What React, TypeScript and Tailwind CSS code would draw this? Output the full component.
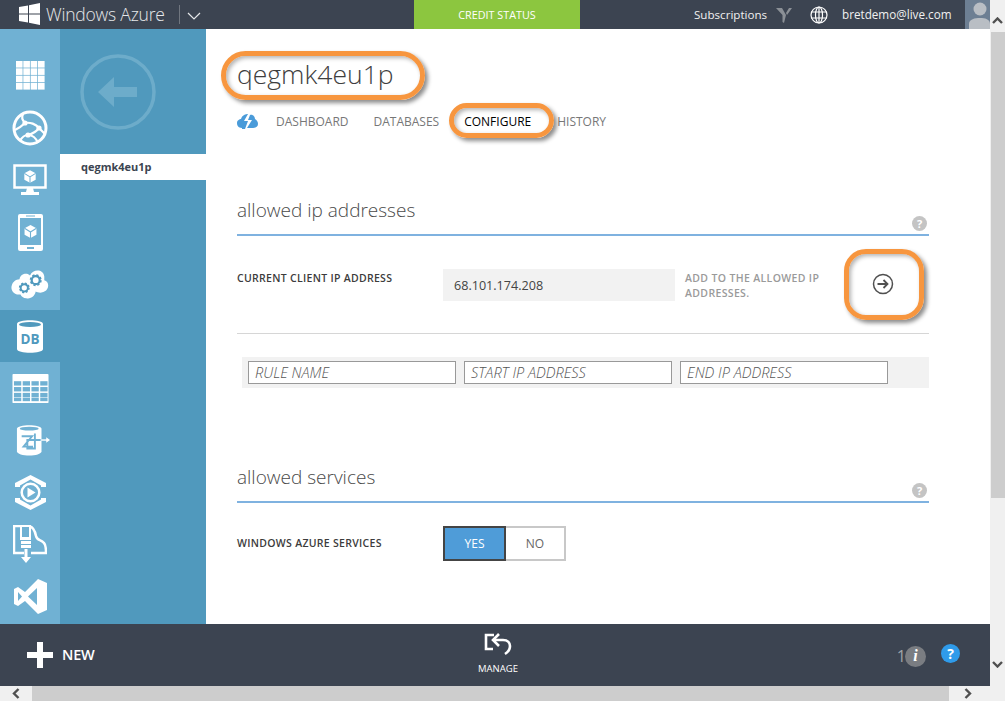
import React from 'react';

const FONT = { fontFamily: '"Open Sans", sans-serif' };

// Rail icons, drawn to fit a 48x48 box
const RAIL = '#70b1d3';
const TILE = '#5099bd';

function Cube({ x, y, s, fill }: { x: number; y: number; s: number; fill: string }) {
  return (
    <g transform={`translate(${x} ${y}) scale(${s})`}>
      <path d="M0 -6 L5.4 -3 L5.4 3 L0 6 L-5.4 3 L-5.4 -3 Z" fill="#fff" />
      <path d="M0 0.4 L0 6 M0 0.4 L-5.4 -3 M0 0.4 L5.4 -3" stroke={fill} strokeWidth="1" fill="none" />
    </g>
  );
}

function Gear({ x, y, r }: { x: number; y: number; r: number }) {
  return (
    <g>
      <circle cx={x} cy={y} r={r} fill="none" stroke={TILE} strokeWidth={r * 0.55} />
      <circle cx={x} cy={y} r={r * 1.3} fill="none" stroke={TILE} strokeWidth={r * 0.4} strokeDasharray={`${r * 0.55} ${r * 0.47}`} />
    </g>
  );
}

const icons: React.ReactNode[] = [
  <svg key="grid" width="29" height="29" viewBox="0 0 29 29" className="-mt-[1px]">
    {[0, 7.33, 14.66, 22].flatMap((y) =>
      [0, 7.33, 14.66, 22].map((x) => <rect key={`${x}-${y}`} x={x} y={y} width="6.6" height="6.6" fill="#fff" />),
    )}
  </svg>,
  <svg key="globe" width="36" height="36" viewBox="0 0 36 36" className="-mt-[1px]">
    <circle cx="18" cy="18" r="16" fill="none" stroke="#fff" strokeWidth="3" />
    <path d="M11 4 C9 8 11 11 13 13 C18 12 24 14 27 18 L33 24 M3 20 C7 18 10 16 13 13 M8 31 C10 27 13 25 16 25 C20 25 24 28 26 33 M27 18 C24 22 20 24 16 25" fill="none" stroke="#fff" strokeWidth="2.2" />
    <circle cx="13" cy="13" r="2.6" fill="#fff" />
    <circle cx="27" cy="18" r="2.6" fill="#fff" />
    <circle cx="16" cy="25" r="2.6" fill="#fff" />
  </svg>,
  <svg key="vm" width="34" height="32" viewBox="0 0 34 32">
    <rect x="1.5" y="1.5" width="31" height="22" fill="none" stroke="#fff" strokeWidth="2.5" />
    <Cube x={17} y={12.5} s={1.05} fill={RAIL} />
    <path d="M14 24 H20 L21 28 H26 V31 H8 V28 H13 Z" fill="#fff" />
  </svg>,
  <svg key="mobile" width="27" height="39" viewBox="0 0 27 39">
    <rect x="1" y="1" width="25" height="37" rx="2" fill="#fff" />
    <rect x="3" y="5" width="21" height="27" fill={RAIL} />
    <rect x="9" y="2.5" width="9" height="1" fill={RAIL} />
    <rect x="10" y="34" width="7" height="2" fill={RAIL} />
    <Cube x={13.5} y={18.5} s={1.1} fill={RAIL} />
  </svg>,
  <svg key="cloud" width="40" height="34" viewBox="0 0 42 34">
    <path
      d="M10 12 C11 6 18 5 21 8 C24 1 35 1 36 9 C36 11 36 12 36 13 C41 14 42 22 36 25 C33 27 29 26 27 25 C26 30 22 33 17 32 C14 32 12 30 11 28 C4 29 0 23 2 18 C3 15 6 12 10 12 Z"
      fill="#fff"
    />
    <Gear x={15} y={21} r={3.8} />
    <Gear x={27} y={13} r={4.2} />
  </svg>,
  <svg key="db" width="28" height="35" viewBox="0 0 28 35">
    <path d="M1 5 C1 0 27 0 27 5 V30 C27 35 1 35 1 30 Z" fill="#fff" />
    <ellipse cx="14" cy="5.5" rx="11" ry="2.5" fill={TILE} />
    <text x="14" y="25" textAnchor="middle" fontSize="13.5" fontWeight="700" fill={TILE} fontFamily="Open Sans, sans-serif">
      DB
    </text>
  </svg>,
  <svg key="table" width="37" height="31" viewBox="0 0 38 31">
    <rect x="0.5" y="0.5" width="37" height="30" rx="1" fill="#fff" />
    {[8, 14, 20, 25].flatMap((y) =>
      [2, 11, 20, 29].map((x) => <rect key={`${x}-${y}`} x={x} y={y} width="7.5" height={y === 25 ? 3.5 : 4.5} fill={RAIL} />),
    )}
  </svg>,
  <svg key="sync" width="34" height="35" viewBox="0 0 36 35" className="ml-[6px]">
    <path d="M1 5 C1 0 27 0 27 5 V29 C27 35 1 35 1 29 Z" fill="#fff" />
    <ellipse cx="14" cy="5" rx="10" ry="2" fill={RAIL} />
    <path d="M6 13 H17 L8 24 H18 M20 10 V26 H12 V17 H30" fill="none" stroke={RAIL} strokeWidth="2" />
    <path d="M26 17 H33" stroke="#fff" strokeWidth="1.5" />
    <path d="M32 14 L36 17 L32 20 Z" fill="#fff" />
  </svg>,
  <svg key="media" width="33" height="37" viewBox="0 0 33 37">
    <path d="M1 12 V9 L16.5 1 L32 9 V13 L27 13 V11.5 L16.5 5.5 L6 11.5 V13 L1 13 Z" fill="#fff" />
    <path d="M1 24 V28 L16.5 36 L32 28 V24 L27 24 V25.5 L16.5 31.5 L6 25.5 V24 Z" fill="#fff" />
    <circle cx="16.5" cy="18.5" r="8.8" fill="none" stroke="#fff" strokeWidth="2.5" />
    <path d="M13.5 13.5 L21.5 18.5 L13.5 23.5 Z" fill="#fff" />
  </svg>,
  <svg key="import" width="34" height="38" viewBox="0 0 34 38">
    <path d="M11 28 H1 V1 H15 C20 1 22 6 23 11 C24 16 28 14 31 18 C33 20 33 24 33 28 H18" fill="none" stroke="#fff" strokeWidth="2.5" />
    <rect x="8" y="1" width="9" height="13" fill={RAIL} stroke="#fff" strokeWidth="2" />
    <rect x="8" y="12" width="10" height="3" fill="#fff" />
    <rect x="8" y="16" width="10" height="3" fill="#fff" />
    <rect x="8" y="20" width="10" height="3" fill="#fff" />
    <path d="M11.5 24 H14.5 V32 H18 L13 38 L8 32 H11.5 Z" fill="#fff" />
  </svg>,
  <svg key="vs" width="33" height="35" viewBox="0 0 33 35">
    <path d="M24 0 L33 4 V31 L24 35 L11 22 L4 27 L0 25 V10 L4 8 L11 13 Z M23 9 L14 17.5 L23 26 Z M4 13 V22 L8 17.5 Z" fill="#fff" fillRule="evenodd" />
  </svg>,
];

function HelpDot({ className }: { className?: string }) {
  return (
    <div className={`flex h-[15px] w-[15px] items-center justify-center rounded-full bg-[#c4c4c4] text-[11px] leading-none font-bold text-white ${className ?? ''}`}>
      ?
    </div>
  );
}

function SectionHeading({ title }: { title: string }) {
  return (
    <div className="relative h-[43px] border-b-2 border-[#7fb2e0] pt-[3px] text-[19px] leading-[28px] font-light text-[#4a4a4a]">
      {title}
      <HelpDot className="absolute right-[2px] bottom-[3px]" />
    </div>
  );
}

function TextField({ placeholder }: { placeholder: string }) {
  return (
    <div className="flex h-[23px] w-[208px] items-center border border-[#999] bg-white px-[6px] pt-[1px] text-[14.5px] font-light text-[#555] italic">
      {placeholder}
    </div>
  );
}

function Callout({ className }: { className: string }) {
  return <div className={`pointer-events-none absolute border-[5px] border-[#f7963f] shadow-[3px_3px_4px_rgba(0,0,0,0.45),inset_2px_2px_4px_rgba(0,0,0,0.3)] ${className}`} />;
}

export default function App() {
  return (
    <div className="relative flex h-[701px] w-[1005px] flex-col overflow-hidden bg-white" style={FONT}>
      <div className="flex min-h-0 flex-1">
        <div className="flex min-w-0 flex-1 flex-col">
          {/* top bar */}
          <header className="flex h-[29px] shrink-0 items-center whitespace-nowrap bg-[#3c4451] text-white">
            <svg width="22" height="22" viewBox="0 0 22 22" className="mt-[-2px] ml-[19px] shrink-0">
              <path d="M0 4 L9 2.5 V10.5 H0 Z M10 2.3 L21 0 V10.5 H10 Z M0 11.5 H9 V19.5 L0 18 Z M10 11.5 H21 V22 L10 19.7 Z" fill="#fff" />
            </svg>
            <span className="ml-[5px] w-[133px] text-[17.5px] font-light tracking-[-0.2px] text-[#e6e8ea]">Windows Azure</span>
            <div className="h-[19px] w-px bg-[#70767f]" />
            <svg width="14" height="8" viewBox="0 0 14 8" className="mt-[3px] ml-[7px]">
              <path d="M1 1 L7 7 L13 1" fill="none" stroke="#e6e8ea" strokeWidth="1.2" />
            </svg>
            <div className="ml-[213px] flex h-full w-[166px] items-center justify-center bg-[#8cc63f] pt-[1px] text-[10.8px]">CREDIT STATUS</div>
            <span className="ml-[114px] w-[73px] text-[11.6px] text-[#f0f0f0]">Subscriptions</span>
            <svg width="16" height="16" viewBox="0 0 16 16" className="ml-[9px]">
              <path d="M0 1 L6 1 L10 8 L8 16 L6.5 15 V8 Z M10 6 L13 1 H16 L11 8 Z" fill="#8b9096" />
            </svg>
            <svg width="18" height="18" viewBox="0 0 18 18" className="ml-[18px]">
              <g fill="none" stroke="#fff" strokeWidth="1.2">
                <circle cx="9" cy="9" r="8" />
                <ellipse cx="9" cy="9" rx="3.5" ry="8" />
                <path d="M1 6 H17 M1 12 H17 M9 1 V17" />
              </g>
            </svg>
            <span className="ml-[14px] text-[11.7px] text-[#f0f0f0]">bretdemo@live.com</span>
            <div className="ml-auto h-full w-[25px] shrink-0 overflow-hidden bg-[#6d7f93]">
              <svg width="25" height="29" viewBox="0 0 25 29">
                <circle cx="15" cy="9" r="6.5" fill="#b9bec4" />
                <path d="M4 29 V24 C4 19 10 18 15 18 C20 18 25 19 25 24 V29 Z" fill="#b9bec4" />
              </svg>
            </div>
          </header>

          <div className="flex min-h-0 flex-1">
            {/* icon rail */}
            <nav className="flex w-[60px] shrink-0 flex-col bg-[#70b1d3] pt-[21px]">
              {icons.map((icon, i) => (
                <div key={i} className={`flex h-[52px] shrink-0 items-center justify-center ${i === 5 ? 'bg-[#5099bd]' : ''}`}>
                  {icon}
                </div>
              ))}
            </nav>

            {/* drill-down column */}
            <aside className="w-[146px] shrink-0 bg-[#5099bd] pt-[25px]">
              <svg width="76" height="76" viewBox="0 0 76 76" className="ml-[20px]">
                <circle cx="38" cy="38" r="36" fill="none" stroke="#6dacca" strokeWidth="3.5" />
                <path d="M18 38 L34 23 V33 H57 V43 H34 V53 Z" fill="#6dacca" />
              </svg>
              <div className="mt-[24px] flex h-[26px] items-center bg-white pl-[21px] text-[11px] font-bold text-[#3c4451]">qegmk4eu1p</div>
            </aside>

            {/* page */}
            <main className="min-w-0 flex-1 pt-[23px] pr-[61px] pl-[31px]">
              <h1 className="h-[44px] text-[26.5px] leading-[44px] font-light text-[#3e3e3e]">qegmk4eu1p</h1>
              <div className="mt-[16px] flex h-[20px] items-center text-[12px] text-[#777]">
                <svg width="21" height="15" viewBox="0 0 21 15" className="mb-[1px]">
                  <path d="M5 14 C1 14 0 11 0 9 C0 6 3 5 4 5 C5 1 9 0 11 0 L7 7 H11 L8 15 H5 Z M13 1 C16 0 18 3 18 5 C20 6 21 8 21 10 C21 13 18 14 16 14 H10 L15 6 H11 Z" fill="#4a9bd9" />
                </svg>
                <span className="ml-[18px]">DASHBOARD</span>
                <span className="ml-[25px]">DATABASES</span>
                <span className="ml-[25px] text-black">CONFIGURE</span>
                <span className="ml-[26px]">HISTORY</span>
              </div>

              <div className="mt-[61px]">
                <SectionHeading title="allowed ip addresses" />
              </div>
              <div className="mt-[33px] flex h-[65px] items-start border-b border-[#d6d6d6]">
                <div className="w-[206px] pt-[2px] text-[10.5px] leading-[14px] font-semibold tracking-[0.3px] whitespace-nowrap text-[#3c3c3c]">CURRENT CLIENT IP ADDRESS</div>
                <div className="flex h-[32px] w-[232px] items-center bg-[#f2f2f2] pt-[2px] pl-[11px] text-[12.6px] text-[#444]">68.101.174.208</div>
                <div className="ml-[10px] w-[150px] pt-[2px] text-[10.5px] leading-[15px] font-semibold tracking-[0.35px] text-[#9a9a9a]">ADD TO THE ALLOWED IP ADDRESSES.</div>
                <svg width="22" height="22" viewBox="0 0 22 22" className="mt-[4px] ml-[37px]">
                  <circle cx="11" cy="11" r="9.5" fill="none" stroke="#505050" strokeWidth="1.5" />
                  <path d="M5.5 11 H15.5 M11.5 7 L15.5 11 L11.5 15" fill="none" stroke="#505050" strokeWidth="1.8" />
                </svg>
              </div>
              <div className="mt-[23px] ml-[5px] flex h-[31px] items-center gap-[8px] bg-[#f2f2f2] pl-[6px]">
                <TextField placeholder="RULE NAME" />
                <TextField placeholder="START IP ADDRESS" />
                <TextField placeholder="END IP ADDRESS" />
              </div>

              <div className="mt-[72px]">
                <SectionHeading title="allowed services" />
              </div>
              <div className="mt-[23px] flex items-center">
                <div className="w-[206px] pt-[1px] text-[10.5px] font-semibold tracking-[0.3px] text-[#3c3c3c]">WINDOWS AZURE SERVICES</div>
                <div className="flex h-[35px] text-[12px]">
                  <div className="flex w-[63px] items-center justify-center border-2 border-[#444] bg-[#4f9cd8] text-white">YES</div>
                  <div className="flex w-[60px] items-center justify-center border-2 border-l-0 border-[#c8c8c8] text-[#666]">NO</div>
                </div>
              </div>
            </main>
          </div>

          {/* command bar */}
          <footer className="flex h-[62px] shrink-0 items-center bg-[#3c4451] text-white">
            <svg width="26" height="26" viewBox="0 0 26 26" className="ml-[27px]">
              <path d="M10 0 H16 V10 H26 V16 H16 V26 H10 V16 H0 V10 H10 Z" fill="#fff" />
            </svg>
            <span className="ml-[9px] w-[33px] text-[14.5px] font-semibold tracking-[-0.2px]">NEW</span>
            <div className="mt-[-4px] ml-[383px] flex w-[40px] flex-col items-center">
              <svg width="28" height="24" viewBox="0 0 28 24" className="-mt-[1px]">
                <path d="M10 3 H2 V17 H9" fill="none" stroke="#fff" strokeWidth="2.6" />
                <path d="M10 8 H19 C24 8 26 11 26 14 C26 18 24 20 21 22" fill="none" stroke="#fff" strokeWidth="2.6" />
                <path d="M15 2 L9 8 L15 14" fill="none" stroke="#fff" strokeWidth="2.6" />
              </svg>
              <span className="mt-[8px] text-[9.5px] leading-none">MANAGE</span>
            </div>
            <span className="mt-[2px] ml-auto text-[16px] text-[#a0a3a8]">1</span>
            <div className="mt-[2px] ml-[-1px] flex h-[21px] w-[21px] items-center justify-center rounded-full bg-[#7a7d82] text-[16px] font-bold text-white italic" style={{ fontFamily: '"Liberation Serif", serif' }}>
              i
            </div>
            <div className="mr-[30px] mb-[3px] ml-[15px] flex h-[19px] w-[19px] items-center justify-center rounded-full bg-[#2f9bea] text-[14px] font-bold text-white">?</div>
          </footer>
        </div>

        {/* vertical scrollbar */}
        <div className="flex w-[15px] shrink-0 flex-col bg-[#f0f0f0]">
          <div className="flex h-[32px] items-center justify-center pt-[8px]">
            <svg width="11" height="7" viewBox="0 0 11 7">
              <path d="M1 6 L5.5 1.5 L10 6" fill="none" stroke="#505050" strokeWidth="2.4" />
            </svg>
          </div>
          <div className="ml-px h-[466px] bg-[#cdcdcd]" />
          <div className="flex flex-1 items-end justify-center pb-[18px]">
            <svg width="11" height="7" viewBox="0 0 11 7">
              <path d="M1 1 L5.5 5.5 L10 1" fill="none" stroke="#505050" strokeWidth="2.4" />
            </svg>
          </div>
        </div>
      </div>

      {/* horizontal scrollbar */}
      <div className="flex h-[15px] shrink-0 items-center bg-[#f0f0f0]">
        <div className="flex w-[32px] justify-center">
          <svg width="8" height="11" viewBox="0 0 8 11">
            <path d="M6.5 1 L2 5.5 L6.5 10" fill="none" stroke="#505050" strokeWidth="2.4" />
          </svg>
        </div>
        <div className="h-full w-[917px] bg-[#cdcdcd]" />
        <div className="ml-[15px] flex w-[8px] justify-center">
          <svg width="8" height="11" viewBox="0 0 8 11">
            <path d="M1.5 1 L6 5.5 L1.5 10" fill="none" stroke="#505050" strokeWidth="2.4" />
          </svg>
        </div>
      </div>

      {/* orange annotations drawn on top of the screenshot */}
      <Callout className="top-[51px] left-[221px] h-[49px] w-[204px] rounded-[25px]" />
      <Callout className="top-[103px] left-[449px] h-[35px] w-[105px] rounded-[18px]" />
      <Callout className="top-[249px] left-[844px] h-[71px] w-[80px] rounded-[22px]" />
    </div>
  );
}
